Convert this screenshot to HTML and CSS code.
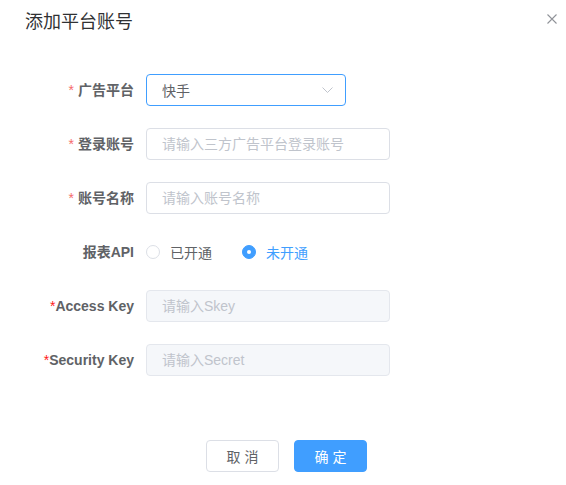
FILE: index.html
```html
<!DOCTYPE html>
<html>

<head>
<meta charset="utf-8">
<link rel="stylesheet" href="styles.css">
</head>

<body>
<div class="dialog">

<div class="dialog-header">
<span class="dialog-title">添加平台账号</span>
<button class="dialog-close" aria-label="close">
<svg width="10" height="10" viewBox="0 0 10 10"><path d="M0.5 0.5 L9.5 9.5 M9.5 0.5 L0.5 9.5" stroke="#909399" stroke-width="1.1" fill="none"/></svg>
</button>
</div>

<div class="dialog-body">
<form class="form">

<div class="form-item">
<label class="form-label is-required">广告平台</label>
<div class="select">
<span>快手</span>
<svg width="11" height="7" viewBox="0 0 11 7"><path d="M0.5 0.5 L5.5 5.5 L10.5 0.5" stroke="#c0c4cc" stroke-width="1" fill="none"/></svg>
</div>
</div>

<div class="form-item">
<label class="form-label is-required">登录账号</label>
<input class="input" type="text" placeholder="请输入三方广告平台登录账号">
</div>

<div class="form-item">
<label class="form-label is-required">账号名称</label>
<input class="input" type="text" placeholder="请输入账号名称">
</div>

<div class="form-item">
<label class="form-label">报表API</label>
<div class="radio-group">
<label class="radio"><span class="radio-dot"></span><span class="radio-text">已开通</span></label>
<label class="radio is-checked"><span class="radio-dot"></span><span class="radio-text">未开通</span></label>
</div>
</div>

<div class="form-item">
<label class="form-label"><span class="star">*</span>Access Key</label>
<input class="input" type="text" placeholder="请输入Skey" disabled>
</div>

<div class="form-item">
<label class="form-label"><span class="star">*</span>Security Key</label>
<input class="input" type="text" placeholder="请输入Secret" disabled>
</div>

</form>
</div>

<div class="dialog-footer">
<button class="btn">取 消</button>
<button class="btn btn-primary">确 定</button>
</div>

</div>
</body>
</html>
```

FILE: styles.css
```css
body {
    margin: 0;
    background: #fff;
    font-family: "Liberation Sans", Arial, "Noto Sans CJK SC", sans-serif;
}

.dialog {
    width: 566px;
    height: 485px;
    background: #fff;
}

.dialog-header {
    display: flex;
    justify-content: space-between;
    align-items: flex-start;
    padding: 10px 9px 0 25px;
}

.dialog-title {
    font-size: 18px;
    line-height: 24px;
    color: #303133;
}

.dialog-close {
    border: none;
    background: none;
    padding: 0;
    margin-top: 4px;
    width: 10px;
    height: 10px;
    display: flex;
}

.dialog-body {
    padding-top: 40px;
}

.form-item {
    display: flex;
    align-items: center;
    height: 32px;
    margin-bottom: 22px;
}

.form-label {
    width: 134px;
    padding-right: 12px;
    text-align: right;
    font-size: 14px;
    font-weight: bold;
    line-height: 32px;
    color: #606266;
}

.form-label.is-required::before {
    content: "*";
    color: #f56c6c;
    margin-right: 4px;
    font-weight: normal;
}

.star {
    color: #ff1a1a;
    font-weight: normal;
}

.select {
    box-sizing: border-box;
    width: 200px;
    height: 32px;
    display: flex;
    align-items: center;
    justify-content: space-between;
    padding: 0 12px 0 15px;
    border: 1px solid #409eff;
    border-radius: 4px;
    font-size: 14px;
    color: #606266;
}

.select svg {
    margin-top: 1px;
}

.input {
    box-sizing: border-box;
    width: 244px;
    height: 32px;
    padding: 0 15px;
    border: 1px solid #dcdfe6;
    border-radius: 4px;
    font-size: 14px;
    font-family: inherit;
    color: #606266;
    background: #fff;
    outline: none;
}

.input::placeholder {
    color: #c0c4cc;
}

.input:disabled {
    background: #f5f7fa;
    border-color: #e4e7ed;
}

.radio-group {
    display: flex;
    align-items: center;
}

.radio {
    display: flex;
    align-items: center;
    margin-right: 30px;
    font-size: 14px;
    color: #606266;
}

.radio-dot {
    box-sizing: border-box;
    width: 14px;
    height: 14px;
    border: 1px solid #dcdfe6;
    border-radius: 50%;
    background: #fff;
    display: flex;
    align-items: center;
    justify-content: center;
}

.radio-text {
    padding-left: 10px;
}

.radio.is-checked .radio-dot {
    border-color: #409eff;
    background: #409eff;
}

.radio.is-checked .radio-dot::after {
    content: "";
    width: 4px;
    height: 4px;
    border-radius: 50%;
    background: #fff;
}

.radio.is-checked .radio-text {
    color: #409eff;
}

.dialog-footer {
    display: flex;
    justify-content: center;
    gap: 15px;
    padding-top: 42px;
    padding-left: 7px;
}

.btn {
    box-sizing: border-box;
    width: 73px;
    height: 32px;
    border: 1px solid #dcdfe6;
    border-radius: 4px;
    background: #fff;
    font-size: 14px;
    font-family: inherit;
    color: #606266;
}

.btn-primary {
    border-color: #409eff;
    background: #409eff;
    color: #fff;
}
```
